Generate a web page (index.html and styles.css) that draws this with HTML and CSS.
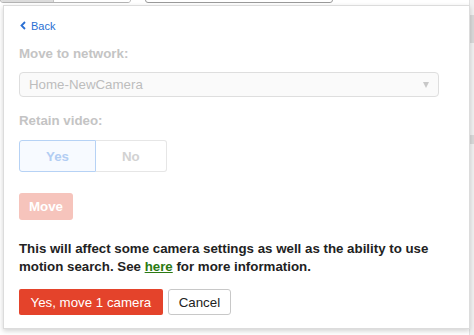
FILE: index.html
```html
<!DOCTYPE html>
<html lang="en">
<head>
  <meta charset="UTF-8">
  <meta name="viewport" content="width=device-width, initial-scale=1.0">
  <title>Move camera</title>
  <link rel="stylesheet" href="styles.css">
</head>
<body>
  <div class="page">
    <div class="main">
      <div class="toolbar">
        <div class="tab-group">
          <span class="tab active"></span>
          <span class="tab"></span>
        </div>
        <div class="search-box"></div>
      </div>
    </div>
    <div class="scroll-track">
      <span class="thumb thumb-top"></span>
      <span class="thumb thumb-mid"></span>
    </div>
  </div>

  <div class="popover">
    <a class="back-link" href="#">
      <svg width="6" height="9" viewBox="0 0 6 9"><path d="M5 1 L1.5 4.5 L5 8" fill="none" stroke="#2a6fd3" stroke-width="1.8"/></svg>
      Back
    </a>

    <p class="field-label">Move to network:</p>
    <div class="select">
      <span>Home-NewCamera</span>
      <span class="caret"></span>
    </div>

    <p class="field-label retain">Retain video:</p>
    <div class="segmented">
      <button class="seg active">Yes</button>
      <button class="seg">No</button>
    </div>

    <button class="btn-move">Move</button>

    <p class="warning">This will affect some camera settings as well as the ability to use motion search. See <a href="#">here</a> for more information.</p>

    <div class="actions">
      <button class="btn-danger">Yes, move 1 camera</button>
      <button class="btn-cancel">Cancel</button>
    </div>
  </div>
</body>
</html>
```

FILE: styles.css
```css
body {
  margin: 0;
  font-family: 'Liberation Sans', Arial, sans-serif;
  background-color: #fff;
  overflow: hidden;
}

.page {
  display: flex;
  height: 335px;
}

.main {
  flex: 1;
  background-color: #fff;
}

.toolbar {
  display: flex;
  gap: 14px;
  margin-top: -20px;
}

.tab-group {
  display: flex;
  width: 129px;
  height: 21px;
  border: 1px solid #b4b4b4;
  border-radius: 3px;
  overflow: hidden;
}

.tab {
  flex: 1;
  background-color: #fff;
}

.tab.active {
  flex: 0 0 52px;
  background-color: #dcdcdc;
  border-right: 1px solid #c4c4c4;
}

.search-box {
  width: 186px;
  height: 21px;
  border: 1px solid #9a9a9a;
  border-radius: 3px;
}

.scroll-track {
  width: 4px;
  background-color: #f1f1f1;
  border-left: 1px solid #e2e2e2;
  display: flex;
  flex-direction: column;
}

.thumb {
  display: block;
  background-color: #d9d9d9;
}

.thumb-top {
  margin-top: 15px;
  height: 28px;
}

.thumb-mid {
  margin-top: 92px;
  height: 9px;
}

/* popover card laid over the page */
.popover {
  position: absolute;
  top: 5px;
  left: 3px;
  width: 435px;
  padding: 10px 15px 13px;
  background-color: #fff;
  border: 1px solid #dcdcdc;
  box-shadow: 0 2px 5px rgba(0, 0, 0, 0.18);
}

.back-link {
  display: inline-flex;
  align-items: center;
  gap: 5px;
  font-size: 11px;
  line-height: 14px;
  color: #2a6fd3;
  text-decoration: none;
  margin-left: 1px;
}

.field-label {
  margin: 12px 0 0;
  font-size: 13.3px;
  line-height: 16px;
  font-weight: 700;
  color: #c4c4c4;
}

.field-label.retain {
  margin-top: 16px;
}

.select {
  display: flex;
  justify-content: space-between;
  align-items: center;
  box-sizing: border-box;
  width: 420px;
  height: 25px;
  margin-top: 10px;
  padding: 0 9px 0 9px;
  border: 1px solid #dedede;
  border-radius: 4px;
  background-color: #fafafa;
  font-size: 13.3px;
  color: #bdbdbd;
}

.caret {
  width: 0;
  height: 0;
  border-left: 3.5px solid transparent;
  border-right: 3.5px solid transparent;
  border-top: 6px solid #c8c8c8;
}

.segmented {
  display: flex;
  margin-top: 11px;
}

.seg {
  height: 32px;
  padding: 0 26px;
  font-family: 'Liberation Sans', Arial, sans-serif;
  font-size: 13.3px;
  font-weight: 700;
  color: #d2d2d2;
  background-color: #fff;
  border: 1px solid #e6e6e6;
  border-left: none;
  border-radius: 0 3px 3px 0;
}

.seg.active {
  padding: 0 26px;
  color: #b2cdf3;
  background-color: #f7faff;
  border: 1px solid #b6d2f5;
  border-radius: 3px 0 0 3px;
}

.btn-move {
  display: block;
  height: 27px;
  margin-top: 21px;
  padding: 0 10px;
  font-family: 'Liberation Sans', Arial, sans-serif;
  font-size: 13.3px;
  font-weight: 700;
  color: #fff;
  background-color: #f6c4bc;
  border: none;
  border-radius: 3px;
}

.warning {
  margin: 20px 0 0;
  font-size: 13.3px;
  line-height: 18px;
  font-weight: 700;
  color: #222;
}

.warning a {
  color: #2b7a12;
}

.actions {
  display: flex;
  gap: 5px;
  margin-top: 13px;
}

.btn-danger {
  height: 26px;
  padding: 0 11.5px;
  font-family: 'Liberation Sans', Arial, sans-serif;
  font-size: 13.3px;
  color: #fff;
  background-color: #e4432b;
  border: none;
  border-radius: 2px;
}

.btn-cancel {
  height: 26px;
  padding: 0 10px;
  font-family: 'Liberation Sans', Arial, sans-serif;
  font-size: 13.3px;
  color: #222;
  background-color: #fff;
  border: 1px solid #c8c8c8;
  border-radius: 3px;
}
```
